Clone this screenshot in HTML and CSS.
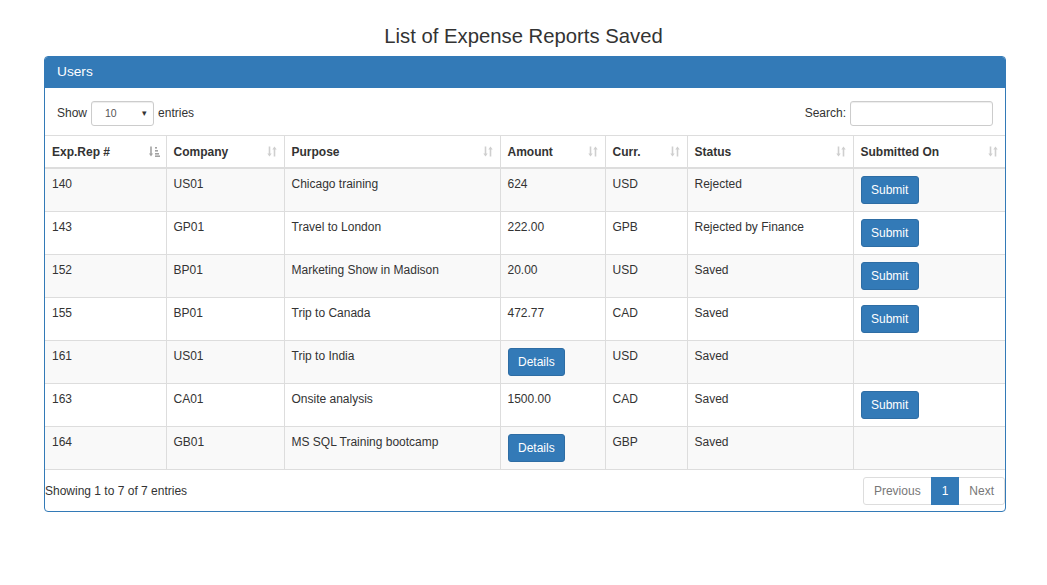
FILE: index.html
```html
<!DOCTYPE html>
<html>
<head>
<meta charset="utf-8">
<title>List of Expense Reports Saved</title>
<link rel="stylesheet" href="styles.css">
</head>
<body>
<h3 class="page-title">List of Expense Reports Saved</h3>
<div class="panel">
  <div class="panel-heading">Users</div>
  <div class="dt-top">
    <label class="dt-length">Show
      <span class="select"><span class="select-val">10</span><span class="select-arrow">&#9662;</span></span>
      entries</label>
    <label class="dt-search">Search: <span class="search-input"></span></label>
  </div>
  <table class="grid">
    <colgroup>
      <col class="c1"><col class="c2"><col class="c3"><col class="c4"><col class="c5"><col class="c6"><col class="c7">
    </colgroup>
    <thead>
      <tr>
        <th><span class="th-label">Exp.Rep #</span>
          <svg class="sort sort-active" width="11" height="11" viewBox="0 0 11 11"><path d="M2 0.5v8.5" stroke="currentColor" stroke-width="1.6"/><path d="M0 7.5h4l-2 3z" fill="currentColor"/><rect x="6" y="1" width="2" height="1.6" fill="currentColor"/><rect x="6" y="4" width="3" height="1.6" fill="currentColor"/><rect x="6" y="7" width="4" height="1.6" fill="currentColor"/><rect x="6" y="9.4" width="5" height="1.6" fill="currentColor"/></svg></th>
        <th><span class="th-label">Company</span><svg class="sort" width="10" height="11" viewBox="0 0 10 11"><path d="M2.5 0.5v8" stroke="currentColor" stroke-width="1.6"/><path d="M0.3 7.5h4.4l-2.2 3z" fill="currentColor"/><path d="M7.5 2.5v8" stroke="currentColor" stroke-width="1.6"/><path d="M5.3 3.5h4.4l-2.2-3z" fill="currentColor"/></svg></th>
        <th><span class="th-label">Purpose</span><svg class="sort" width="10" height="11" viewBox="0 0 10 11"><path d="M2.5 0.5v8" stroke="currentColor" stroke-width="1.6"/><path d="M0.3 7.5h4.4l-2.2 3z" fill="currentColor"/><path d="M7.5 2.5v8" stroke="currentColor" stroke-width="1.6"/><path d="M5.3 3.5h4.4l-2.2-3z" fill="currentColor"/></svg></th>
        <th><span class="th-label">Amount</span><svg class="sort" width="10" height="11" viewBox="0 0 10 11"><path d="M2.5 0.5v8" stroke="currentColor" stroke-width="1.6"/><path d="M0.3 7.5h4.4l-2.2 3z" fill="currentColor"/><path d="M7.5 2.5v8" stroke="currentColor" stroke-width="1.6"/><path d="M5.3 3.5h4.4l-2.2-3z" fill="currentColor"/></svg></th>
        <th><span class="th-label">Curr.</span><svg class="sort" width="10" height="11" viewBox="0 0 10 11"><path d="M2.5 0.5v8" stroke="currentColor" stroke-width="1.6"/><path d="M0.3 7.5h4.4l-2.2 3z" fill="currentColor"/><path d="M7.5 2.5v8" stroke="currentColor" stroke-width="1.6"/><path d="M5.3 3.5h4.4l-2.2-3z" fill="currentColor"/></svg></th>
        <th><span class="th-label">Status</span><svg class="sort" width="10" height="11" viewBox="0 0 10 11"><path d="M2.5 0.5v8" stroke="currentColor" stroke-width="1.6"/><path d="M0.3 7.5h4.4l-2.2 3z" fill="currentColor"/><path d="M7.5 2.5v8" stroke="currentColor" stroke-width="1.6"/><path d="M5.3 3.5h4.4l-2.2-3z" fill="currentColor"/></svg></th>
        <th><span class="th-label">Submitted On</span><svg class="sort" width="10" height="11" viewBox="0 0 10 11"><path d="M2.5 0.5v8" stroke="currentColor" stroke-width="1.6"/><path d="M0.3 7.5h4.4l-2.2 3z" fill="currentColor"/><path d="M7.5 2.5v8" stroke="currentColor" stroke-width="1.6"/><path d="M5.3 3.5h4.4l-2.2-3z" fill="currentColor"/></svg></th>
      </tr>
    </thead>
    <tbody>
      <tr><td>140</td><td>US01</td><td>Chicago training</td><td>624</td><td>USD</td><td>Rejected</td><td><button class="btn">Submit</button></td></tr>
      <tr><td>143</td><td>GP01</td><td>Travel to London</td><td>222.00</td><td>GPB</td><td>Rejected by Finance</td><td><button class="btn">Submit</button></td></tr>
      <tr><td>152</td><td>BP01</td><td>Marketing Show in Madison</td><td>20.00</td><td>USD</td><td>Saved</td><td><button class="btn">Submit</button></td></tr>
      <tr><td>155</td><td>BP01</td><td>Trip to Canada</td><td>472.77</td><td>CAD</td><td>Saved</td><td><button class="btn">Submit</button></td></tr>
      <tr><td>161</td><td>US01</td><td>Trip to India</td><td><button class="btn">Details</button></td><td>USD</td><td>Saved</td><td></td></tr>
      <tr><td>163</td><td>CA01</td><td>Onsite analysis</td><td>1500.00</td><td>CAD</td><td>Saved</td><td><button class="btn">Submit</button></td></tr>
      <tr><td>164</td><td>GB01</td><td>MS SQL Training bootcamp</td><td><button class="btn">Details</button></td><td>GBP</td><td>Saved</td><td></td></tr>
    </tbody>
  </table>
  <div class="dt-bottom">
    <div class="dt-info">Showing 1 to 7 of 7 entries</div>
    <ul class="pagination">
      <li class="page disabled">Previous</li>
      <li class="page active">1</li>
      <li class="page disabled">Next</li>
    </ul>
  </div>
</div>
</body>
</html>
```
FILE: styles.css
```css
* { box-sizing: border-box; }
body {
  margin: 0;
  background: #fff;
  color: #333;
  font-family: "Liberation Sans", Arial, sans-serif;
  font-size: 12px;
  line-height: 17px;
}
.page-title {
  margin: 25px 0 9px;
  text-align: center;
  font-size: 20.3px;
  font-weight: normal;
  line-height: 22px;
  color: #333;
}
.panel {
  margin-left: 44px;
  width: 962px;
  border: 1px solid #337ab7;
  border-radius: 4px;
  background: #fff;
  overflow: hidden;
}
.panel-heading {
  background: #337ab7;
  color: #fff;
  font-size: 13.7px;
  line-height: 17px;
  padding: 6px 12px 8px 12px;
}
.dt-top {
  display: flex;
  justify-content: space-between;
  align-items: center;
  padding: 13px 12px 9px 12px;
  border-bottom: 1px solid #ddd;
}
.dt-length, .dt-search {
  display: flex;
  align-items: center;
}
.select {
  display: inline-flex;
  align-items: center;
  justify-content: space-between;
  width: 63px;
  height: 25px;
  margin: 0 4px 0 4px;
  padding: 0 6px 0 13px;
  border: 1px solid #ccc;
  border-radius: 3px;
  font-size: 10.5px;
  color: #555;
  box-shadow: inset 0 1px 1px rgba(0,0,0,0.075);
}
.select-arrow { font-size: 9px; color: #333; }
.search-input {
  display: inline-block;
  width: 143px;
  height: 25px;
  margin-left: 4px;
  border: 1px solid #ccc;
  border-radius: 3px;
  box-shadow: inset 0 1px 1px rgba(0,0,0,0.075);
}
.grid {
  width: 100%;
  border-collapse: collapse;
  table-layout: fixed;
}
.c1 { width: 121px; }
.c2 { width: 118px; }
.c3 { width: 216px; }
.c4 { width: 105px; }
.c5 { width: 82px; }
.c6 { width: 166px; }
.c7 { width: auto; }
.grid th, .grid td {
  border-left: 1px solid #ddd;
  padding: 7px 7px;
  text-align: left;
  vertical-align: top;
}
.grid th:first-child, .grid td:first-child { border-left: 0; }
.grid th {
  position: relative;
  font-weight: bold;
  padding-top: 8px;
  padding-bottom: 6px;
  border-bottom: 2px solid #ddd;
}
.grid td { border-top: 1px solid #ddd; }
.grid tbody tr:first-child td { border-top: 0; }
.grid tbody tr:nth-child(odd) { background: #f9f9f9; }
.grid tbody tr:last-child td { border-bottom: 1px solid #ddd; }
.sort {
  position: absolute;
  right: 7px;
  top: 10px;
  color: #cfcfcf;
}
.sort-active { color: #a2a2a2; right: 6px; }
.btn {
  font-family: inherit;
  font-size: 12px;
  line-height: 16px;
  padding: 5px 9.5px;
  color: #fff;
  background: #337ab7;
  border: 1px solid #2e6da4;
  border-radius: 3px;
  display: block;
}
.dt-bottom {
  display: flex;
  justify-content: space-between;
  align-items: center;
  padding: 7px 0 6px 0;
}
.pagination {
  display: flex;
  list-style: none;
  margin: 0;
  padding: 0;
}
.page {
  padding: 5px 10px;
  line-height: 16px;
  border: 1px solid #ddd;
  margin-left: -1px;
  color: #777;
  background: #fff;
}
.page:first-child { border-radius: 3px 0 0 3px; }
.page:last-child { border-radius: 0 3px 3px 0; }
.page.active {
  background: #337ab7;
  border-color: #337ab7;
  color: #fff;
  position: relative;
}
```
